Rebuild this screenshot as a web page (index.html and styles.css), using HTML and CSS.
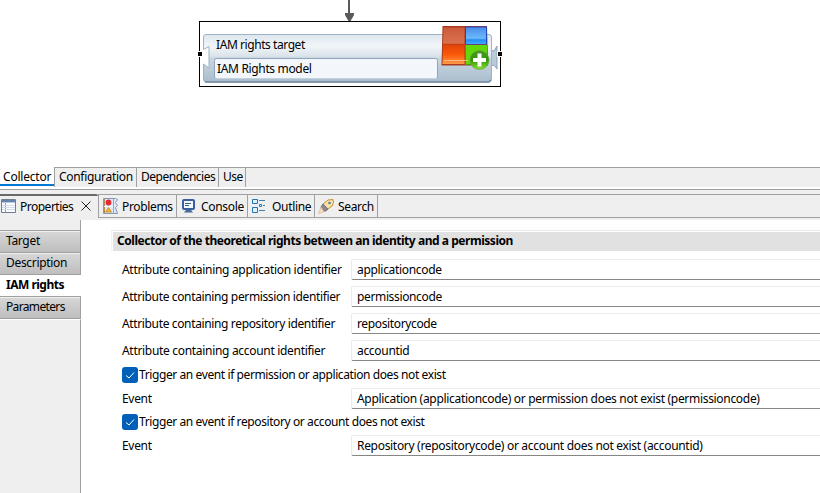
FILE: index.html
```html
<!DOCTYPE html>
<html lang="en">
<head>
<meta charset="utf-8">
<title>Collector editor</title>
<link rel="stylesheet" href="styles.css">
</head>
<body>
<main class="app">
  <section class="canvas">
    <svg class="drawing" width="820" height="167" viewBox="0 0 820 167">
      <defs>
        <linearGradient id="card" x1="0" y1="0" x2="0" y2="1"><stop offset="0" stop-color="#dde7ee"/><stop offset=".25" stop-color="#f1f5f8"/><stop offset=".45" stop-color="#dbe4eb"/><stop offset=".5" stop-color="#c9d6e0"/><stop offset="1" stop-color="#a9bdce"/></linearGradient>
        <linearGradient id="red" x1="0" y1="0" x2="0" y2="1"><stop offset="0" stop-color="#cc5c3c"/><stop offset=".42" stop-color="#d9704e"/><stop offset=".48" stop-color="#e24408"/><stop offset=".75" stop-color="#fb5a08"/><stop offset="1" stop-color="#ff9a4a"/></linearGradient>
        <linearGradient id="blue" x1="0" y1="0" x2="0" y2="1"><stop offset="0" stop-color="#4a8eea"/><stop offset=".65" stop-color="#6db8fa"/><stop offset=".75" stop-color="#218cf5"/><stop offset="1" stop-color="#42a9ff"/></linearGradient>
        <linearGradient id="plus" x1="0" y1="0" x2="0" y2="1"><stop offset="0" stop-color="#4c9b25"/><stop offset=".5" stop-color="#2f9505"/><stop offset="1" stop-color="#8ce52c"/></linearGradient>
      </defs>
      <path d="M349 0V15" stroke="#5a5a5a" stroke-width="2"/>
      <path d="M345 13h9v2l-4 7h-1l-4-7z" fill="#5a5a5a"/>
      <rect x="199.500" y="21.500" width="301" height="65" fill="#fff" stroke="#000"/>
      <path d="M491 50l3 1 3-5v23l-3-4-3 1z" fill="#b9cad8" stroke="#8fa5b8"/>
      <path d="M206 34.500H489q2.500 0 2.500 2.500V79q0 3-3 3H206q-2.500 0-2.500-3V64l5.500 4V46.500l-5.500 3V37q0-2.500 2.500-2.500z" fill="url(#card)" stroke="#9eb3c5"/>
      <path d="M205 82h284l2-2" stroke="#71899f" stroke-width="1.500" fill="none"/>
      <rect x="214.500" y="58.500" width="223" height="20" rx="2" fill="#f3f6fa" stroke="#8fa5bb"/>
      <path d="M215 78.500H437" stroke="#c4d1de"/>
      <path d="M442.500 26h44.500l1 39.500h-46.500z" fill="#a93a20"/>
      <path d="M443.500 27.500h21V64h-22z" fill="url(#red)"/>
      <path d="M465 26.500h22V44.500h-22z" fill="#2547b8"/>
      <path d="M466 27.500h20v16.500h-20z" fill="url(#blue)"/>
      <path d="M465 45h22.500l.5 20h-23z" fill="#3f9f09"/>
      <path d="M466 45h21v19h-21z" fill="#62d70a"/>
      <path d="M443 44.500h21" stroke="#b43a14" stroke-width=".7"/>
      <path d="M444 60.500h24" stroke="#ffc795" stroke-width=".8" fill="none"/>
      <circle cx="479.500" cy="60" r="9.500" fill="url(#plus)" stroke="#5e9f48" stroke-width=".7"/>
      <path d="M479.500 53.500v13M473 60h13" stroke="#fff" stroke-width="4"/>
      <path d="M197 51h6v6h-6zM497 51h6v6h-6z" fill="#fff"/>
      <path d="M198 52h4v4h-4zM498 52h4v4h-4z"/>
    </svg>
    <span class="node-title">IAM rights target</span>
    <span class="node-name">IAM Rights model</span>
  </section>

  <nav class="pages">
    <span class="page active">Collector</span><span class="page">Configuration</span><span class="page p3">Dependencies</span><span class="page p4">Use</span><span class="rest"></span>
  </nav>
  <div class="sash"></div>
  <nav class="views">
    <span class="view active v1">
      <svg class="i-table" width="15" height="14" viewBox="0 0 15 14"><path d="M.5.500h14v13H.5z" fill="#f8fbff" stroke="#747d8c"/><path d="M1 1h13v2H1z" fill="#6883ab"/><path d="M1 3.500h13" stroke="#b8cce5"/><path d="M4.500 4v9" stroke="#8fa2ba"/><path d="M1 6.500h13M1 8.500h13M1 10.500h13" stroke="#d3dce8"/></svg>
      <b class="vt">Properties</b>
      <svg class="i-close" width="10" height="10" viewBox="0 0 10 10"><path d="M.5.500l9 9M9.500.500l-9 9" stroke="#222" fill="none"/></svg>
    </span>
    <span class="view v2">
      <svg class="i-prob" width="15" height="16" viewBox="0 0 15 16"><path d="M.5.500h12l2 1-2 3 2 3-2 2 2 6H.5z" fill="#dce8f6" stroke="#8598af"/><path d="M1.500 1v14" stroke="#b48c56"/><path d="M10.500 1v14" stroke="#8fa9c6"/><path d="M1 8.500h9" stroke="#f5faff"/><circle cx="5.500" cy="4.500" r="2.900" fill="#e32b36"/><path d="M5.500 9.500L8.500 14h-6z" fill="#f4b52f" stroke="#cb861b" stroke-width=".8"/></svg>
      <b class="vt">Problems</b>
    </span>
    <span class="view v3">
      <svg class="i-cons" width="13" height="14" viewBox="0 0 13 14"><rect x="1" y="1" width="11" height="9" rx="1" fill="#f3f8ff" stroke="#395f9d" stroke-width="2"/><path d="M3 4.500h6M3 6.500h4" stroke="#405b82"/><path d="M4 11h5l2 2.500H2z" fill="#47699d"/></svg>
      <b class="vt">Console</b>
    </span>
    <span class="view v4">
      <svg class="i-outl" width="14" height="16" viewBox="0 0 14 16"><path d="M.5 1.500h5v4h-5zM.5 9.500h5v5h-5z" fill="#dff0fc" stroke="#2476b3"/><path d="M7 2.500h6M7 12.500h6M11 7.500h2" stroke="#4180ab"/><path d="M7.500 6.500h2v2h-2z" fill="#dff0fc" stroke="#2476b3"/></svg>
      <b class="vt">Outline</b>
    </span>
    <span class="view v5">
      <svg class="i-srch" width="16" height="15" viewBox="0 0 16 15"><path d="M5 5l5-4 5-.5.5 3L14 7l-4 3z" fill="#fae3a5" stroke="#c98a34"/><path d="M5 5l5 5-2 2H4L3 8z" fill="#8d8992" stroke="#77727b"/><path d="M3 8l3 5-5.500 1.500z" fill="#f4dfc3" stroke="#d7b28b" stroke-width=".6"/><circle cx="11.500" cy="4" r="1.300" fill="#587ca8"/></svg>
      <b class="vt">Search</b>
    </span>
    <span class="rest"></span>
  </nav>
  <div class="body">
    <aside class="side">
      <span class="tab"><b>Target</b></span>
      <span class="tab s2"><b>Description</b></span>
      <span class="tab selected"><b>IAM rights</b></span>
      <span class="tab s4"><b>Parameters</b></span>
      <span class="fill"></span>
    </aside>
    <section class="form">
      <h1><span>Collector of the theoretical rights between an identity and a permission</span></h1>
      <div class="row"><label>Attribute containing application identifier</label><div class="field">applicationcode</div></div>
      <div class="row"><label class="tight">Attribute containing permission identifier</label><div class="field tight">permissioncode</div></div>
      <div class="row"><label class="tight">Attribute containing repository identifier</label><div class="field tight">repositorycode</div></div>
      <div class="row"><label>Attribute containing account identifier</label><div class="field">accountid</div></div>
      <div class="check"><svg width="16" height="16" viewBox="0 0 16 16"><rect width="16" height="16" rx="3" fill="#005fb8"/><path d="M4 8.500l3 2.500 5-5.500" fill="none" stroke="#fff"/></svg><span>Trigger an event if permission or application does not exist</span></div>
      <div class="row event"><label>Event</label><div class="field long">Application (applicationcode) or permission does not exist (permissioncode)</div></div>
      <div class="check"><svg width="16" height="16" viewBox="0 0 16 16"><rect width="16" height="16" rx="3" fill="#005fb8"/><path d="M4 8.500l3 2.500 5-5.500" fill="none" stroke="#fff"/></svg><span>Trigger an event if repository or account does not exist</span></div>
      <div class="row event"><label>Event</label><div class="field long">Repository (repositorycode) or account does not exist (accountid)</div></div>
    </section>
  </div>
</main>
</body>
</html>
```
FILE: styles.css
```css
* { box-sizing: border-box; }
body { margin: 0; background: #fff; color: #000; font: 12px/16px "Noto Sans", "Open Sans", sans-serif; letter-spacing: -0.31px; overflow: hidden; }
b { font-weight: 400; }
svg { display: block; flex: none; }
.app { width: 820px; height: 493px; display: flex; flex-direction: column; white-space: nowrap; }
.canvas { height: 167px; position: relative; flex: none; }
.node-title, .node-name { position: absolute; }
.node-title { left: 216px; top: 37px; letter-spacing: -0.43px; }
.node-name { left: 217px; top: 61px; letter-spacing: -0.34px; }
.pages { display: flex; height: 20px; flex: none; }
.page { border-top: 1px solid #a0a0a0; border-left: 1px solid #a0a0a0; background: #efefef; padding: 1px 0 0 4px; width: 82px; }
.page.active { width: 54px; background: #fff; border: 0; border-bottom: 2px solid #0078d4; padding: 2px 0 0 3px; height: 19px; letter-spacing: -0.2px; }
.page.p3 { letter-spacing: -0.48px; }
.page.p4 { width: 27px; letter-spacing: -0.5px; }
.pages .rest { flex: 1; background: #efefef; border-top: 1px solid #a0a0a0; border-left: 1px solid #a0a0a0; }
.sash { height: 8px; flex: none; margin-top: 2px; margin-bottom: -3px; background: #efefef; border-top: 1px solid #a0a0a0; }
.views { height: 24px; display: flex; flex: none; }
.view { display: flex; align-items: flex-start; padding-left: 5px; border-top: 1px solid #a0a0a0; border-bottom: 1px solid #a0a0a0; border-left: 1px solid #a0a0a0; background: #efefef; }
.view.active { border: 0; border-top: 2px solid #696969; border-radius: 0 2px 0 0; padding-left: 1px; }
.vt { margin-top: 4px; }
.view.active .vt { margin-top: 3px; }
.v1 { width: 98px; letter-spacing: -0.5px; }
.v2 { width: 78px; padding-left: 4px; letter-spacing: -0.35px; }
.v3 { width: 71px; }
.v4 { width: 67px; padding-left: 4px; }
.v5 { width: 63px; padding-left: 3px; letter-spacing: -0.35px; }
.v1 .vt { margin-left: 4px; width: 54px; letter-spacing: -0.5px; }
.v2 .vt, .v5 .vt { margin-left: 4px; }
.v3 .vt, .v4 .vt { margin-left: 6px; }
.i-table { margin-top: 3px; }
.i-close { margin: 5px 0 0 7px; }
.i-prob { margin-top: 3px; }
.i-cons { margin-top: 4px; }
.i-outl { margin-top: 3px; }
.i-srch { margin-top: 4px; }
.views .rest { flex: 1; background: #efefef; border: 1px solid #a0a0a0; border-right: 0; }
.body { display: flex; flex: 1; border-top: 2px solid #efefef; min-height: 0; }
.side { width: 81px; display: flex; flex-direction: column; padding-top: 10px; background: linear-gradient(#a0a0a0, #a0a0a0) 80px 0 / 1px 11px no-repeat, #efefef; }
.tab { height: 22px; flex: none; border-top: 1px solid #a0a0a0; border-right: 1px solid #a0a0a0; padding: 2px 0 0 6px; background: linear-gradient(#efefef 1px, #d6d6d6 1px, #bebebe); }
.tab.s2 { border-bottom: 1px solid #a0a0a0; height: 23px; }
.tab.selected { background: #fff; border: 0; height: 21px; padding-top: 2px; letter-spacing: -0.5px; }
.selected b { font-weight: 700; }
.tab.s4 { height: 23px; border-bottom: 1px solid #a0a0a0; letter-spacing: -0.6px; }
.tab.s4 { letter-spacing: -0.65px; }
.fill { flex: 1; border-right: 1px solid #a0a0a0; border-top: 1px solid #fff; }
.form { flex: 1; padding: 10px 0 0 31px; min-width: 0; }
h1 { margin: 0 0 8px -1px; height: 21px; border-top: 1px solid #e9e9e9; border-left: 1px solid #f2f2f2; padding: 1px 0 0 1px; font-size: 12px; font-weight: 700; line-height: 18px; letter-spacing: -0.46px; }
h1 span { display: block; background: #e1e1e1; height: 19px; padding-left: 4px; }
.row { display: flex; height: 21px; margin-bottom: 6px; padding-left: 10px; }
.row label { width: 229px; padding-top: 3px; }
.field { flex: 1; height: 21px; border: 1px solid #ebebeb; border-right: 0; border-bottom-color: #868686; border-radius: 2px 0 0 2px; padding: 2px 0 0 5px; }
.tight { letter-spacing: -0.36px; }
.check { display: flex; height: 16px; padding-left: 10px; margin-bottom: 5px; letter-spacing: -0.4px; }
.check span { padding-left: 1px; }
.row.event { margin-bottom: 5px; }
```
